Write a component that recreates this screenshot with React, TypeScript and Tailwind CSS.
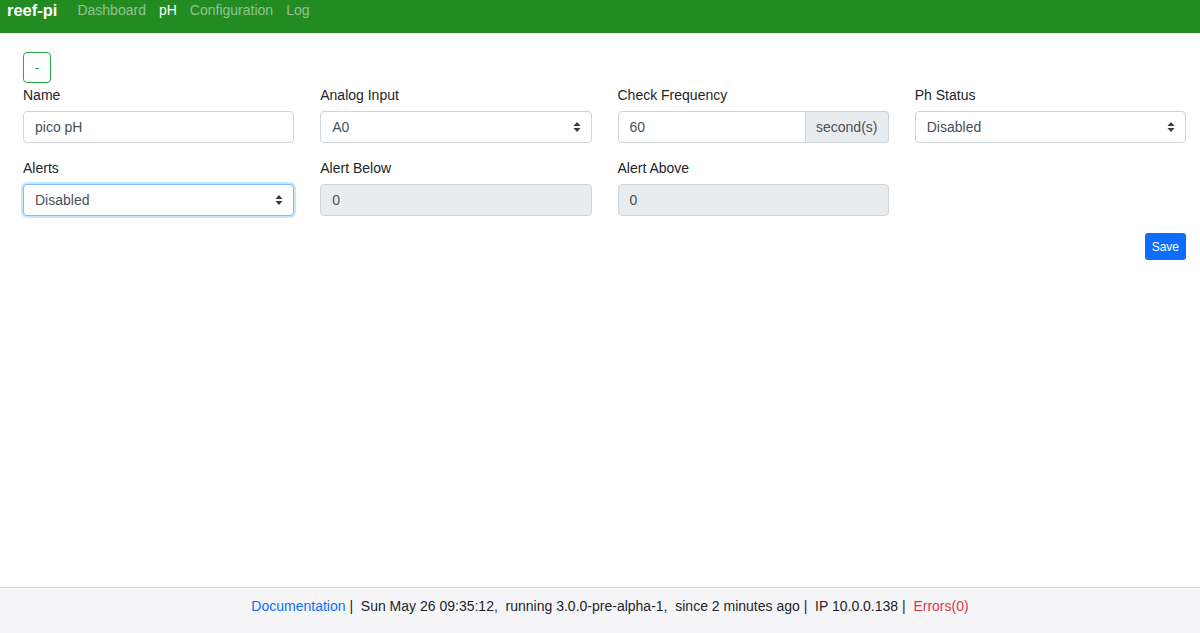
import { ReactNode } from "react";

function Caret() {
  return (
    <svg width="8" height="12" viewBox="0 0 8 12" className="shrink-0">
      <path d="M4 1 L7.5 5 H0.5 Z" fill="#343a40" />
      <path d="M4 11 L7.5 7 H0.5 Z" fill="#343a40" />
    </svg>
  );
}

function Field({ label, children }: { label: string; children: ReactNode }) {
  return (
    <div className="flex flex-col">
      <label className="text-[14px] text-[#212529] leading-[21px] mb-[5px]">{label}</label>
      {children}
    </div>
  );
}

function Select({ value, focus }: { value: string; focus?: boolean }) {
  return (
    <div
      className={
        "h-[32px] flex items-center justify-between pl-[11px] pr-[10px] rounded-[4px] bg-white text-[14px] text-[#495057] border " +
        (focus ? "border-[#80bdff] shadow-[0_0_0_2px_rgba(0,123,255,0.2)]" : "border-[#ced4da]")
      }
    >
      <span>{value}</span>
      <Caret />
    </div>
  );
}

function Input({ value, disabled }: { value: string; disabled?: boolean }) {
  return (
    <div
      className={
        "h-[32px] flex items-center px-[11px] rounded-[4px] border border-[#ced4da] text-[14px] text-[#495057] " +
        (disabled ? "bg-[#e9ecef]" : "bg-white")
      }
    >
      {value}
    </div>
  );
}

export default function App() {
  return (
    <div className="min-h-[633px] flex flex-col bg-white font-['Liberation_Sans',Arial,sans-serif]">
      <nav className="h-[33px] bg-[#228b22] flex items-center pl-[7px]">
        <span className="text-white font-bold text-[16.5px] mr-[20px] -mt-[13px]">reef-pi</span>
        <div className="flex gap-[13px] text-[14px] -mt-[13px]">
          <a className="text-white/50">Dashboard</a>
          <a className="text-white">pH</a>
          <a className="text-white/50">Configuration</a>
          <a className="text-white/50">Log</a>
        </div>
      </nav>

      <main className="flex-1 pl-[23px] pr-[14px] pt-[19px]">
        <button className="w-[28px] h-[31px] rounded-[4px] border border-[#28a745] text-[#28a745] text-[14px] leading-none mb-[2px]">
          -
        </button>
        <div className="grid grid-cols-4 gap-x-[26px] gap-y-[15px]">
          <Field label="Name">
            <Input value="pico pH" />
          </Field>
          <Field label="Analog Input">
            <Select value="A0" />
          </Field>
          <Field label="Check Frequency">
            <div className="flex h-[32px]">
              <div className="flex-1 flex items-center px-[11px] rounded-l-[4px] border border-[#ced4da] bg-white text-[14px] text-[#495057]">
                60
              </div>
              <div className="w-[83px] flex items-center justify-center rounded-r-[4px] border border-l-0 border-[#ced4da] bg-[#e9ecef] text-[14px] text-[#495057]">
                second(s)
              </div>
            </div>
          </Field>
          <Field label="Ph Status">
            <Select value="Disabled" />
          </Field>
          <Field label="Alerts">
            <Select value="Disabled" focus />
          </Field>
          <Field label="Alert Below">
            <Input value="0" disabled />
          </Field>
          <Field label="Alert Above">
            <Input value="0" disabled />
          </Field>
        </div>
        <div className="flex justify-end mt-[17px]">
          <button className="h-[27px] px-[7px] rounded-[3px] bg-[#0d6efd] text-white text-[12px]">Save</button>
        </div>
      </main>

      <footer className="h-[46px] border-t border-[#d6d6d6] bg-[#f5f5f7] flex justify-center pl-[20px] pt-[8px] text-[14px] text-[#212529]">
        <span className="whitespace-pre">
          <a className="text-[#0d6efd]">Documentation</a>
          {" |  Sun May 26 09:35:12,  running 3.0.0-pre-alpha-1,  since 2 minutes ago |  IP 10.0.0.138 |  "}
          <span className="text-[#dc3545]">Errors(0)</span>
        </span>
      </footer>
    </div>
  );
}
